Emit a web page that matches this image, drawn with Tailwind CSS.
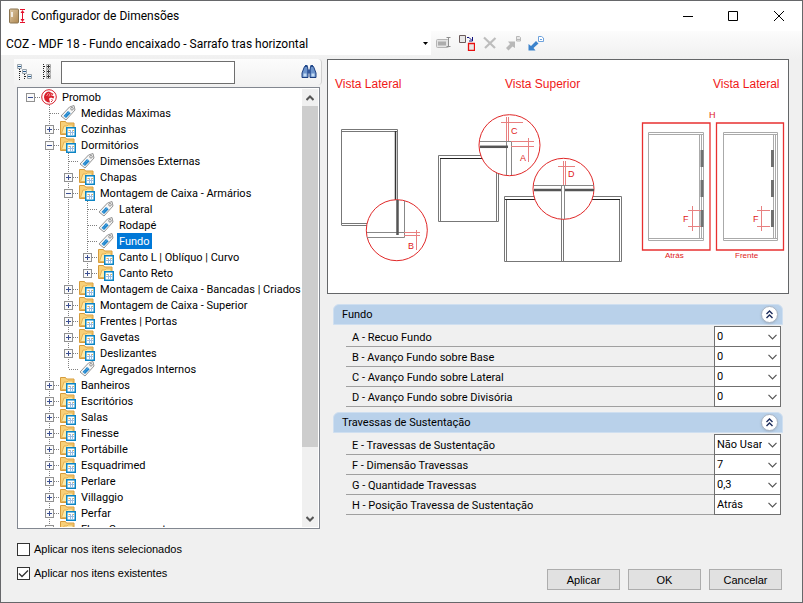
<!DOCTYPE html>
<html lang="pt-BR">

<head>
    <meta charset="UTF-8">
    <meta name="viewport" content="width=device-width, initial-scale=1.0">
    <title>Configurador de Dimensões</title>
    <!-- Tailwind CSS CDN -->
    <script src="https://cdn.jsdelivr.net/npm/@tailwindcss/browser@4"></script>
</head>

<body class="h-screen flex flex-col overflow-hidden border border-[#66676a] bg-[#f0f0f0] text-[11px] leading-4 text-black font-[Roboto,Arial,sans-serif]">

    <!-- Shared icons -->
    <svg class="hidden" aria-hidden="true">
        <symbol id="icon-folder" viewBox="0 0 16 16">
            <path d="M.5 13.500V.5h5l1 1.500h7.500v11.500z" fill="#f8d078" stroke="#d69c3c" />
            <path d="M1.500 12.500l2.500-7.500h3l1-1h5v8.500z" fill="#fdeaa8" stroke="#e0a848" stroke-width=".8" />
            <rect x="6.750" y="6.750" width="8.500" height="8.500" fill="#fff" stroke="#0b84c4" stroke-width="1.500" />
            <path d="M8.500 9.500h2M12 9.500h2" stroke="#f2b83c" />
            <path d="M8 11.500h6M10.500 9v5M12.500 9v5" stroke="#9cbce0" />
        </symbol>
        <symbol id="icon-tag" viewBox="0 0 16 16">
            <path d="M1 11L9.500 2l4.500-1.500L15 5 6 15z" fill="#f6f6f6" stroke="#949494" />
            <path d="M3.500 11l4.500-5 2.700 2.300L6 13z" fill="#1d84cc" />
            <path d="M4.500 12l5-5.500" stroke="#7cc0ec" stroke-dasharray="1 1" />
            <circle cx="12" cy="3.800" r="1.300" fill="#fff" stroke="#777" stroke-width=".8" />
        </symbol>
        <symbol id="icon-promob" viewBox="0 0 16 16">
            <circle cx="8" cy="8" r="7.300" fill="#fff" stroke="#d8202c" />
            <path d="M8 2.500a5.500 5.500 0 1 0 1 11l-1-4 2-1 2.500 1 .8-2-2.300-.8 1.500-2z" fill="#d8202c" />
            <path d="M7.500 4L5.500 7M9 4.500L8 7.500M11 4.500l-1 2.500" fill="none" stroke="#f8b0b0" stroke-width=".8" />
            <path d="M10.500 10.500l1.500 1M10 12.500h1" stroke="#d8202c" />
        </symbol>
        <symbol id="icon-plus" viewBox="0 0 9 9">
            <rect x=".5" y=".5" width="8" height="8" fill="#fafafa" stroke="#919191" />
            <path d="M2 4.500h5M4.500 2v5" stroke="#3b4f91" />
        </symbol>
        <symbol id="icon-minus" viewBox="0 0 9 9">
            <rect x=".5" y=".5" width="8" height="8" fill="#fafafa" stroke="#919191" />
            <path d="M2 4.500h5" stroke="#3b4f91" />
        </symbol>
        <symbol id="icon-chevron" viewBox="0 0 9 6">
            <path d="M.5 .8l4 4 4-4" fill="none" stroke="#555" stroke-width="1.200" />
        </symbol>
    </svg>

    <!-- Title bar -->
    <header class="h-[30px] shrink-0 flex items-center bg-white pl-2 text-xs">
        <svg class="w-4 h-4 mr-1.5" viewBox="0 0 16 16">
            <defs>
                <linearGradient id="door" x1="0" x2="1" y2="1">
                    <stop offset="0" stop-color="#dcc8a8" />
                    <stop offset="1" stop-color="#b08850" />
                </linearGradient>
            </defs>
            <rect x=".5" y="1" width="9" height="14" rx="1" fill="url(#door)" stroke="#8a7450" />
            <path d="M3 4v5" stroke="#fff" stroke-width="1.500" />
            <path d="M11 1.500h5M11 14.500h5M13.500 3v10" stroke="#e4102c" />
            <path d="M11.500 5l2-3 2 3zM11.500 11l2 3 2-3z" fill="#e4102c" />
        </svg>
        <h1 class="grow">Configurador de Dimensões</h1>
        <button class="w-[45px] h-full grid place-items-center" aria-label="Minimizar">
            <svg class="w-2.5 h-2.5" viewBox="0 0 10 10"><path d="M0 5.500h10" stroke="#000" /></svg>
        </button>
        <button class="w-[46px] h-full grid place-items-center" aria-label="Maximizar">
            <svg class="w-2.5 h-2.5" viewBox="0 0 10 10"><path d="M.5 .5h9v9h-9z" fill="none" stroke="#000" /></svg>
        </button>
        <button class="w-[46px] h-full grid place-items-center" aria-label="Fechar">
            <svg class="w-2.5 h-2.5" viewBox="0 0 10 10"><path d="M0 0l10 10M10 0L0 10" stroke="#000" /></svg>
        </button>
    </header>

    <!-- Toolbar -->
    <div class="h-7 shrink-0 flex items-start bg-linear-to-b from-[#fcfcfc] to-[#f0f0f0]">
        <div class="grid grid-cols-[1fr_12px] items-center w-[430px] h-6 bg-white">
            <select aria-label="Configuração"
                class="row-start-1 col-start-1 col-span-2 h-6 appearance-none bg-transparent pl-[5px] pt-0.5 text-xs">
                <option>COZ - MDF 18 - Fundo encaixado - Sarrafo tras horizontal</option>
            </select>
            <svg class="row-start-1 col-start-2 w-[5px] h-[3px] justify-self-center pointer-events-none" viewBox="0 0 5 3"><path d="M0 0h5L2.500 3z" /></svg>
        </div>
        <div class="flex items-center gap-[7px] h-6 pl-[5px]">
            <button aria-label="Renomear">
                <svg class="block w-4 h-4" viewBox="0 0 16 16" fill="none">
                    <rect x=".5" y="4.500" width="12" height="8" rx="1" fill="#e4e4e4" stroke="#b5b5b5" />
                    <rect x="2" y="6.500" width="8" height="4" fill="#adadad" />
                    <path d="M10.500 2.500h4M10.500 11.500h4M12.500 3v8" stroke="#8e8e8e" />
                </svg>
            </button>
            <button aria-label="Duplicar">
                <svg class="block w-4 h-4" viewBox="0 0 16 16" fill="none">
                    <path d="M.5 .5h6v7h-6z" fill="#e8e8e8" stroke="#6b5b5b" />
                    <path d="M9.500 8.500h6v7h-6z" fill="#e8e8e8" stroke="#e81010" stroke-width="1.300" />
                    <path d="M8 2.500h2l2.500 2.500M13.500 2v4H10" stroke="#10107c" />
                </svg>
            </button>
            <button aria-label="Excluir">
                <svg class="block w-4 h-4" viewBox="0 0 16 16"><path d="M2 2.500l11 10.500M13.500 3L3 13" stroke="#bdbdbd" stroke-width="2.200" /></svg>
            </button>
            <button aria-label="Exportar">
                <svg class="block w-4 h-4" viewBox="0 0 16 16">
                    <path d="M1 13l4-4-2-2.500h7V13l-2.500-1.500-4 4z" fill="#b8b8b8" />
                    <path d="M11.500 1.500h3l1 1v3.500h-4z" fill="#e8e8e8" stroke="#b8b8b8" />
                    <path d="M12 4.500h3" stroke="#b8b8b8" />
                </svg>
            </button>
            <button aria-label="Importar">
                <svg class="block w-4 h-4" viewBox="0 0 16 16">
                    <path d="M8 6l2.500 2.500-5 4.500 2 2.500H.5V9L3 11z" fill="#3c83cc" />
                    <path d="M10.500 1.500h3l2 1.500v3.500h-5z" fill="#fff" stroke="#6ea2dc" />
                    <path d="M12 4.500h2" stroke="#6ea2dc" />
                </svg>
            </button>
        </div>
    </div>

    <main class="grow min-h-0 flex gap-1 pl-[13px] pr-[13px]">

        <!-- Left column: search and tree -->
        <section class="w-[308px] shrink-0 flex flex-col">
            <div class="h-[26px] shrink-0 flex items-center rounded-r bg-linear-to-b from-[#fcfcfc] to-[#f2f2f2] border-r border-[#d0d0d0] pl-[3px] pr-1">
                <button aria-label="Recolher tudo">
                    <svg class="block w-4 h-4" viewBox="0 0 16 16" fill="none">
                        <path d="M.5 .5h4v4h-4zM5.500 5.500h4v4h-4zM10.500 10.500h4v4h-4z" fill="#eef4fa" stroke="#9aa4ac" />
                        <path d="M1 2.500h3M6 7.500h3M11 12.500h3" stroke="#2a5c8c" />
                        <path d="M2.500 5v11M3 7.500h2M7.500 10v6M8 12.500h2" stroke="#222" stroke-dasharray="1 1" />
                    </svg>
                </button>
                <button class="ml-2" aria-label="Expandir tudo">
                    <svg class="block w-4 h-4" viewBox="0 0 16 16" fill="none">
                        <path d="M5.500 .5h4v4h-4zM5.500 5.500h4v4h-4zM5.500 10.500h4v4h-4z" fill="#eee" stroke="#aaa" />
                        <path d="M6 2.500h3M7.500 1v3M6 7.500h3M7.500 6v3M6 12.500h3M7.500 11v3" stroke="#333" />
                        <path d="M2.500 0v16M3 2.500h2M3 7.500h2M3 12.500h2" stroke="#222" stroke-dasharray="1 1" />
                    </svg>
                </button>
                <input type="text" aria-label="Pesquisar" class="w-[174px] h-[23px] ml-1 border border-[#6e6e6e] bg-white px-1">
                <button class="ml-auto" aria-label="Localizar">
                    <svg class="block w-4 h-4" viewBox="0 0 16 16">
                        <path d="M3.500 2.500h3l.5 4v7H1V9zM9.500 2.500h3L15 9v4.500H9v-7z" fill="#6d94cc" stroke="#1c3f80" />
                        <path d="M6.500 5.500h3v4h-3z" fill="#33589c" />
                        <path d="M4 1h2.500v2H4zM9.500 1H12v2H9.500z" fill="#234a8c" />
                        <path d="M2.500 9.500h3v3h-3zM10.500 9.500h3v3h-3z" fill="#c4dcf4" />
                    </svg>
                </button>
            </div>

            <div class="h-[442px] shrink-0 flex mt-[2px] ml-[3px] mr-[2px] border border-[#828790] bg-white p-px">
                <ul id="tree" role="tree" class="grow min-w-0 overflow-hidden pl-[2px]"></ul>
                <div class="w-4 flex flex-col bg-[#f0f0f0]">
                    <div class="h-[17px] grid place-items-center">
                        <svg class="w-2 h-1.5" viewBox="0 0 8 6"><path d="M.5 5L4 1.500 7.500 5" fill="none" stroke="#555" stroke-width="2" /></svg>
                    </div>
                    <div class="h-[341px] bg-[#cdcdcd]"></div>
                    <div class="h-[17px] mt-auto grid place-items-center">
                        <svg class="w-2 h-1.5" viewBox="0 0 8 6"><path d="M.5 1L4 4.500 7.500 1" fill="none" stroke="#555" stroke-width="2" /></svg>
                    </div>
                </div>
            </div>

            <div class="mt-3 ml-[3px] flex flex-col gap-2 font-['Liberation_Sans',Arial,sans-serif]">
                <label class="grid grid-cols-[13px_1fr] items-center h-4 gap-x-1">
                    <input type="checkbox" class="peer row-start-1 col-start-1 appearance-none size-[13px] border border-[#333] bg-white">
                    <svg class="row-start-1 col-start-1 size-[13px] invisible peer-checked:visible pointer-events-none" viewBox="0 0 13 13"><path d="M2 6.500l3 3 6-6" fill="none" stroke="#333" stroke-width="1.300" /></svg>
                    <span>Aplicar nos itens selecionados</span>
                </label>
                <label class="grid grid-cols-[13px_1fr] items-center h-4 gap-x-1">
                    <input type="checkbox" checked class="peer row-start-1 col-start-1 appearance-none size-[13px] border border-[#333] bg-white">
                    <svg class="row-start-1 col-start-1 size-[13px] invisible peer-checked:visible pointer-events-none" viewBox="0 0 13 13"><path d="M2 6.500l3 3 6-6" fill="none" stroke="#333" stroke-width="1.300" /></svg>
                    <span>Aplicar nos itens existentes</span>
                </label>
            </div>
        </section>

        <!-- Right column: drawing and properties -->
        <section class="grow min-w-0 flex flex-col pl-px">
            <svg class="block w-full border border-[#646668] bg-white font-['Liberation_Sans',Arial,sans-serif]" viewBox="328 60 460 233" fill="none">
                <g fill="#f01818" font-size="12">
                    <text x="335" y="88">Vista Lateral</text>
                    <text x="505" y="88">Vista Superior</text>
                    <text x="713" y="88">Vista Lateral</text>
                </g>

                <!-- Side view -->
                <g stroke="#777">
                    <path d="M341.500 225V129.500H397.500V200M341.500 131.500H397M341.500 223.500H367M341.500 225.500H367" />
                    <path d="M395.500 131V202" stroke="#333" stroke-width="1.500" />
                </g>
                <circle cx="396.800" cy="230.200" r="30.500" fill="#fff" stroke="#e02828" />
                <path d="M367 232.500H404.500M367 237.500H404.500V201" stroke="#888" />
                <path d="M397.500 200V235" stroke="#555" stroke-width="2.500" />
                <path d="M404 232.500H420M404 235.500H420M416.500 230V250" stroke="#e88080" />

                <!-- Top view, single box -->
                <g stroke="#777">
                    <path d="M438.500 155.500H498.500V221.500H438.500zM440.500 158V221M496.500 158V221" />
                    <path d="M440 158.500H496" stroke="#222" />
                </g>
                <circle cx="509.500" cy="145.200" r="30.500" fill="#fff" stroke="#e02828" />
                <path d="M480 141.500H511.500V175M506.500 141V175" stroke="#888" />
                <path d="M480 146.800H508" stroke="#555" stroke-width="2.500" />
                <path d="M501 122.500H523M506.500 117V141M508.500 117V141M511 141.500H534M511 146.500H534M528.500 138V162" stroke="#e88080" />

                <!-- Top view, double box -->
                <g stroke="#777">
                    <path d="M504.500 196.500H621.500V261.500H504.500zM506.500 199V261M619.500 199V261M561.500 199V261M563.500 199V261" />
                    <path d="M505 199.500H620" stroke="#222" />
                </g>
                <circle cx="563.500" cy="188.800" r="30.500" fill="#fff" stroke="#e02828" />
                <path d="M534 185.500H594M561.500 185V219M564.500 185V219" stroke="#888" />
                <path d="M534 190H561M565 190H594" stroke="#555" stroke-width="2.500" />
                <path d="M558 166.500H575M563.500 161V185M565.500 161V185" stroke="#e88080" />

                <!-- Back and front frames -->
                <path d="M642.500 123H710V250H642.500zM716.500 123H783.500V250H716.500z" stroke="#e83030" stroke-width="1.300" />
                <g stroke="#aaa">
                    <path d="M648.500 132.500H703.500V240.500H648.500zM649 134.500H703M649 238.500H703M699.500 135V238M701.500 135V238" />
                    <path d="M723.500 132.500H777.500V240.500H723.500zM724 134.500H777M724 238.500H777M773.500 135V238M775.500 135V238" />
                </g>
                <path d="M702 150V167M702 180V197M702 210V227M772.500 150V167M772.500 180V197M772.500 210V227" stroke="#707070" stroke-width="3" />
                <path d="M688 210.500H701M688 226.500H701M692.500 206V231M757 210.500H770M757 226.500H770M761.500 206V231" stroke="#e88080" />

                <g fill="#e02020" font-size="9">
                    <text x="408" y="249">B</text>
                    <text x="511" y="134">C</text>
                    <text x="520" y="161">A</text>
                    <text x="568" y="177">D</text>
                    <text x="709" y="118">H</text>
                    <text x="683" y="222">F</text>
                    <text x="753" y="222">F</text>
                </g>
                <g fill="#e02020" font-size="8">
                    <text x="665" y="258">Atrás</text>
                    <text x="735" y="258">Frente</text>
                </g>
            </svg>

            <div id="groups" class="mt-2.5 pl-1.5 pr-1.5 flex flex-col gap-[5px]"></div>

            <div class="mt-auto mb-3 pr-[7px] flex justify-end gap-2 font-['Liberation_Sans',Arial,sans-serif]">
                <button class="w-[73px] h-[21px] border border-[#adadad] bg-[#e1e1e1]">Aplicar</button>
                <button class="w-[73px] h-[21px] border border-[#adadad] bg-[#e1e1e1]">OK</button>
                <button class="w-[73px] h-[21px] border border-[#adadad] bg-[#e1e1e1]">Cancelar</button>
            </div>
        </section>
    </main>

    <script>
        // [level, icon, label, expander]
        const nodes = [
            [0, 'promob', 'Promob', 'minus'],
            [1, 'tag', 'Medidas Máximas'],
            [1, 'folder', 'Cozinhas', 'plus'],
            [1, 'folder', 'Dormitórios', 'minus'],
            [2, 'tag', 'Dimensões Externas'],
            [2, 'folder', 'Chapas', 'plus'],
            [2, 'folder', 'Montagem de Caixa - Armários', 'minus'],
            [3, 'tag', 'Lateral'],
            [3, 'tag', 'Rodapé'],
            [3, 'tag', 'Fundo'],
            [3, 'folder', 'Canto L | Oblíquo | Curvo', 'plus'],
            [3, 'folder', 'Canto Reto', 'plus'],
            [2, 'folder', 'Montagem de Caixa - Bancadas | Criados', 'plus'],
            [2, 'folder', 'Montagem de Caixa - Superior', 'plus'],
            [2, 'folder', 'Frentes | Portas', 'plus'],
            [2, 'folder', 'Gavetas', 'plus'],
            [2, 'folder', 'Deslizantes', 'plus'],
            [2, 'tag', 'Agregados Internos'],
            [1, 'folder', 'Banheiros', 'plus'],
            [1, 'folder', 'Escritórios', 'plus'],
            [1, 'folder', 'Salas', 'plus'],
            [1, 'folder', 'Finesse', 'plus'],
            [1, 'folder', 'Portábille', 'plus'],
            [1, 'folder', 'Esquadrimed', 'plus'],
            [1, 'folder', 'Perlare', 'plus'],
            [1, 'folder', 'Villaggio', 'plus'],
            [1, 'folder', 'Perfar', 'plus'],
            [1, 'folder', 'Floor Components', 'plus']
        ];
        const selected = 'Fundo';

        // True when another node of the given level follows before its parent ends
        function continues(index, level) {
            for (let i = index + 1; i < nodes.length; i++) {
                if (nodes[i][0] < level) return false;
                if (nodes[i][0] === level) return true;
            }
            return false;
        }

        // One 19px cell of the guide lines in front of a node
        function guide(index, level) {
            const [own, , , expander] = nodes[index];
            let path = '';
            if (level === own) {
                path += 'M10 8.500h9';
                if (level > 0) path += 'M9.500 0v8';
            }
            if (level > 0 && continues(index, level)) path += level === own ? 'M9.500 8v8' : 'M9.500 0v16';
            const box = level === own && expander ? `<use href="#icon-${expander}" x="5" y="4" width="9" height="9" />` : '';
            return `<svg class="w-[19px] h-4 shrink-0" viewBox="0 0 19 16"><path d="${path}" stroke="#808080" stroke-dasharray="1 1" />${box}</svg>`;
        }

        document.getElementById('tree').innerHTML = nodes.map(([level, icon, label], index) => {
            let cells = '';
            for (let l = 0; l <= level; l++) cells += guide(index, l);
            const text = label === selected ? 'bg-[#0078d7] text-white' : '';
            return `<li role="treeitem" aria-level="${level + 1}" class="flex h-4 whitespace-nowrap">${cells}
                <svg class="w-4 h-4 ml-px mr-[3px] shrink-0"><use href="#icon-${icon}" /></svg>
                <span class="px-[2px] leading-[18px] ${text}">${label}</span></li>`;
        }).join('');

        const groups = [
            ['Fundo', [
                ['A - Recuo Fundo', '0'],
                ['B - Avanço Fundo sobre Base', '0'],
                ['C - Avanço Fundo sobre Lateral', '0'],
                ['D - Avanço Fundo sobre Divisória', '0']
            ]],
            ['Travessas de Sustentação', [
                ['E - Travessas de Sustentação', 'Não Usar'],
                ['F - Dimensão Travessas', '7'],
                ['G - Quantidade Travessas', '0,3'],
                ['H - Posição Travessa de Sustentação', 'Atrás']
            ]]
        ];

        document.getElementById('groups').innerHTML = groups.map(([title, rows], g) => `
            <section>
                <h2 class="h-[21px] flex items-center justify-between rounded-t-md border border-[#cfdff0] bg-[#b9d1ea] pl-2 pr-1">
                    ${title}
                    <button class="size-[17px] grid place-items-center rounded-full border border-[#a8b4c4] bg-white shadow" aria-label="Recolher ${title}">
                        <svg class="w-[9px] h-[9px]" viewBox="0 0 9 9"><path d="M1.500 4l3-3 3 3M1.500 8l3-3 3 3" fill="none" stroke="#1c2c5c" stroke-width="1.400" /></svg>
                    </button>
                </h2>
                <div class="mt-px ml-[13px] mr-[2px] pt-px">
                    ${rows.map(([name, value], r) => `
                    <div class="flex h-5 border-b border-[#a0a0a0]">
                        <label for="p${g}${r}" class="grow self-center pl-1.5 pt-0.5">${name}</label>
                        <div class="grid w-[67px] h-[21px] -mt-px">
                            <select id="p${g}${r}" class="row-start-1 col-start-1 h-[21px] w-full appearance-none border border-[#707070] bg-white pl-[2px] pr-[18px]">
                                <option>${value}</option>
                            </select>
                            <svg class="row-start-1 col-start-1 w-[9px] h-1.5 justify-self-end self-center mr-1 pointer-events-none"><use href="#icon-chevron" /></svg>
                        </div>
                    </div>`).join('')}
                </div>
            </section>`).join('');
    </script>
</body>

</html>
